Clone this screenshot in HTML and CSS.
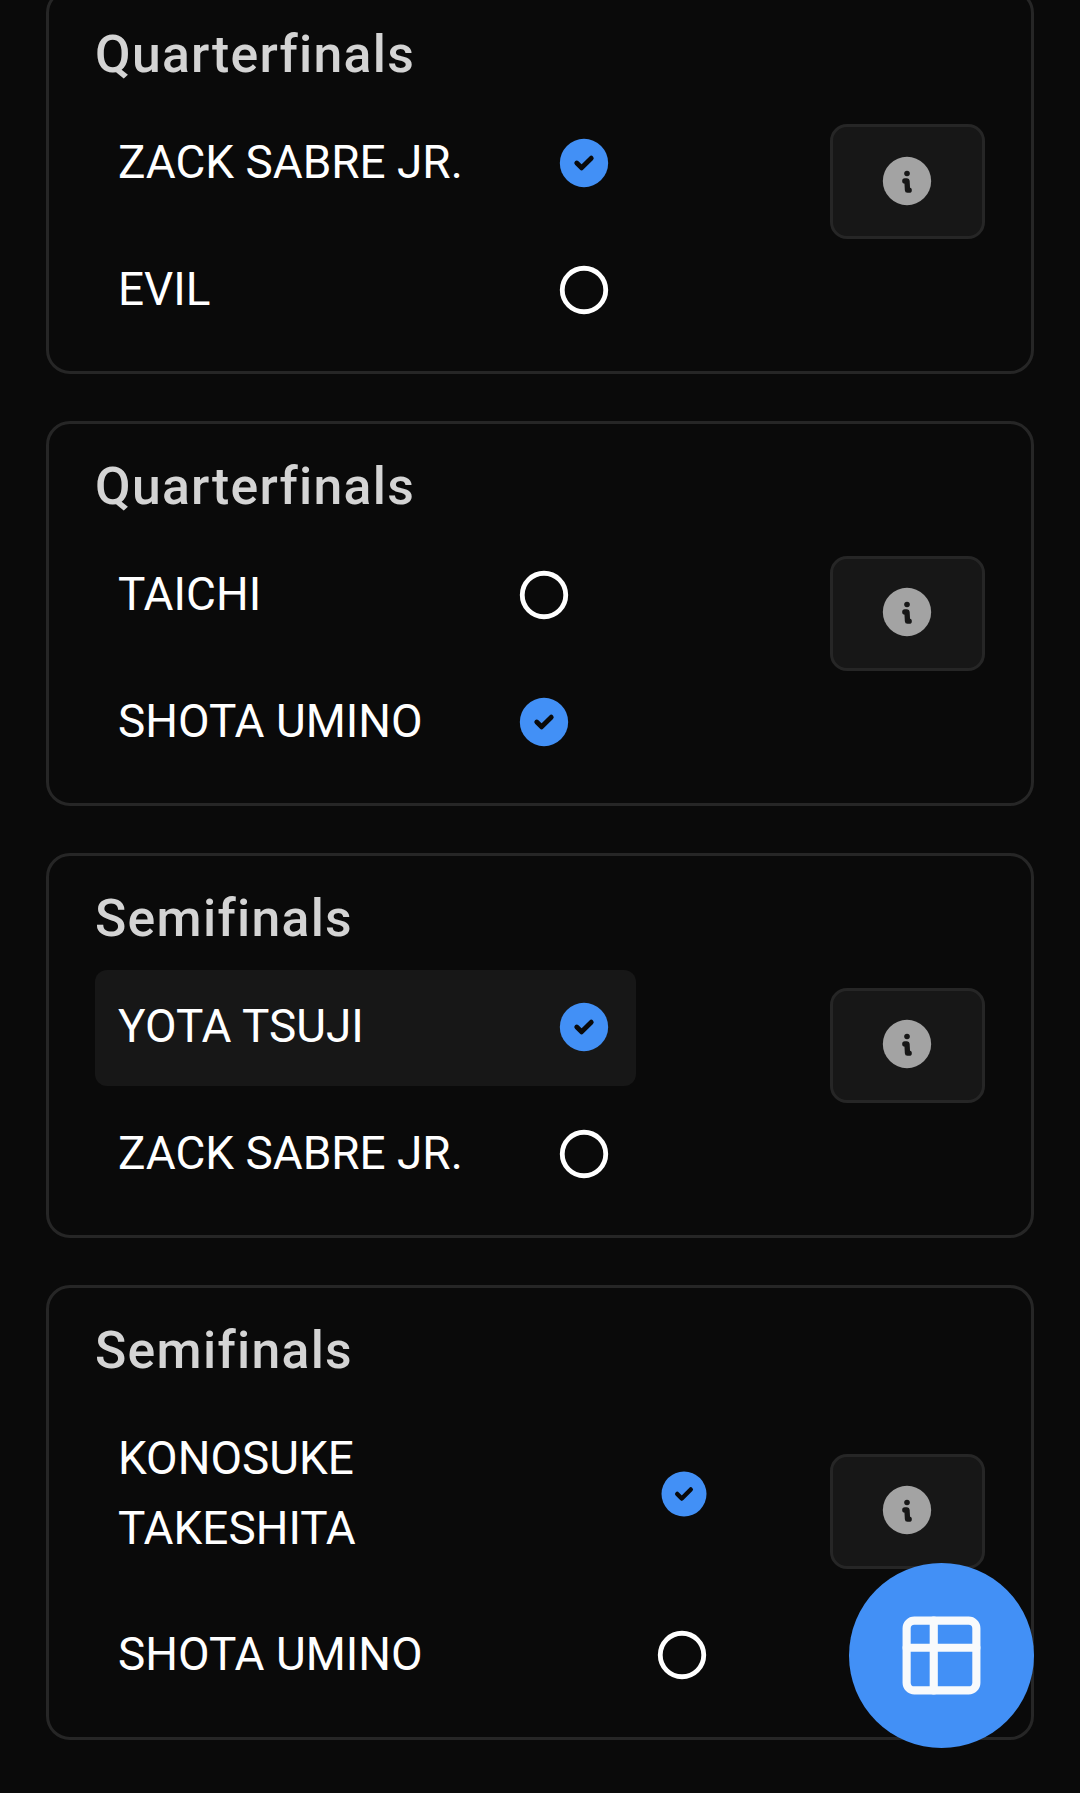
FILE: index.html
```html
<!DOCTYPE html>
<html lang="en">
<head>
  <meta charset="UTF-8" />
  <meta name="viewport" content="width=device-width, initial-scale=1.0"/>
  <title>Tournament Picks</title>
  <link rel="stylesheet" href="styles.css">
</head>
<body>

  <!-- Shared icons -->
  <svg class="icon-defs" width="0" height="0">
    <symbol id="icon-check" viewBox="0 0 24 24">
      <circle cx="12" cy="12" r="10" fill="#4290f6" />
      <path d="M9 12l2 2l4-4" fill="none" stroke="currentColor" stroke-width="2" stroke-linecap="round" stroke-linejoin="round" />
    </symbol>
    <symbol id="icon-circle" viewBox="0 0 24 24">
      <circle cx="12" cy="12" r="9" fill="none" stroke="#fff" stroke-width="2" />
    </symbol>
    <symbol id="icon-info" viewBox="0 0 24 24">
      <circle cx="12" cy="12" r="10" fill="#a3a3a3" />
      <path d="M12 8.9h.01" fill="none" stroke="#171717" stroke-width="2.3" stroke-linecap="round" />
      <path d="M11.1 12h.9l.2 3.8h.7" fill="none" stroke="#171717" stroke-width="2.2" stroke-linecap="round" stroke-linejoin="round" />
    </symbol>
  </svg>

  <main class="matches">
    <section class="card">
      <h2>Quarterfinals</h2>
      <div class="match">
        <div class="players">
          <div class="player"><span>ZACK SABRE JR.</span><svg class="icon"><use href="#icon-check" /></svg></div>
          <div class="player"><span>EVIL</span><svg class="icon"><use href="#icon-circle" /></svg></div>
        </div>
        <button class="info-button" aria-label="Match info"><svg class="icon"><use href="#icon-info" /></svg></button>
      </div>
    </section>

    <section class="card">
      <h2>Quarterfinals</h2>
      <div class="match">
        <div class="players narrow">
          <div class="player"><span>TAICHI</span><svg class="icon"><use href="#icon-circle" /></svg></div>
          <div class="player"><span>SHOTA UMINO</span><svg class="icon"><use href="#icon-check" /></svg></div>
        </div>
        <button class="info-button" aria-label="Match info"><svg class="icon"><use href="#icon-info" /></svg></button>
      </div>
    </section>

    <section class="card">
      <h2>Semifinals</h2>
      <div class="match">
        <div class="players">
          <div class="player active"><span>YOTA TSUJI</span><svg class="icon"><use href="#icon-check" /></svg></div>
          <div class="player"><span>ZACK SABRE JR.</span><svg class="icon"><use href="#icon-circle" /></svg></div>
        </div>
        <button class="info-button" aria-label="Match info"><svg class="icon"><use href="#icon-info" /></svg></button>
      </div>
    </section>

    <section class="card">
      <h2>Semifinals</h2>
      <div class="match tall">
        <div class="players wide">
          <div class="player"><span>KONOSUKE<br>TAKESHITA</span><svg class="icon small"><use href="#icon-check" /></svg></div>
          <div class="player"><span>SHOTA UMINO</span><svg class="icon"><use href="#icon-circle" /></svg></div>
        </div>
        <button class="info-button" aria-label="Match info"><svg class="icon"><use href="#icon-info" /></svg></button>
      </div>
    </section>
  </main>

  <button class="table-button" aria-label="Show table">
    <svg viewBox="0 0 24 24" fill="none" stroke="currentColor" stroke-width="2.1" stroke-linecap="round" stroke-linejoin="round">
      <path d="M3 5a2 2 0 0 1 2-2h14a2 2 0 0 1 2 2v14a2 2 0 0 1-2 2H5a2 2 0 0 1-2-2z" />
      <path d="M3 10h18M10 3v18" />
    </svg>
  </button>

</body>
</html>
```

FILE: styles.css
```css
* {
  box-sizing: border-box;
}

body {
  margin: 0;
  height: 1793px;
  overflow: hidden;
  background-color: #0a0a0a;
  color: #fff;
  font-family: Roboto, sans-serif;
  font-size: 45.9px;
  line-height: 69.6px;
}

button {
  padding: 0;
  border: none;
  display: flex;
  align-items: center;
  justify-content: center;
}

.icon-defs {
  display: block;
}

.matches {
  display: flex;
  flex-direction: column;
  gap: 47px;
  margin-top: -11px;
  padding: 0 46px;
}

.card {
  padding: 24px 46px 22.5px;
  border: 3px solid #262626;
  border-radius: 24px;
}

.card h2 {
  margin: 0 0 12px;
  color: #d4d4d4;
  font-size: 51.7px;
  font-weight: 500;
  line-height: 78px;
  letter-spacing: 1.3px;
}

.match {
  display: flex;
  justify-content: space-between;
  align-items: flex-start;
}

.players {
  display: flex;
  flex-direction: column;
  gap: 11.3px;
  width: 541px;
}

.players.narrow {
  width: 501px;
}

.players.wide {
  width: 639px;
}

.player {
  display: flex;
  align-items: center;
  justify-content: space-between;
  padding: 22px 23px 24px;
  border-radius: 12px;
}

.player.active {
  background-color: #171717;
}

.icon {
  flex: none;
  width: 58px;
  height: 58px;
  color: #0a0a0a;
}

.icon.small {
  width: 54px;
  height: 54px;
}

.info-button {
  width: 155px;
  height: 115px;
  margin-top: 18px;
  padding: 0 1px 2px 0;
  background-color: #171717;
  border: 3px solid #262626;
  border-radius: 17px;
}

.tall .info-button {
  margin-top: 52px;
}

.table-button {
  position: fixed;
  right: 46px;
  bottom: 45px;
  width: 185px;
  height: 185px;
  border-radius: 50%;
  background-color: #4290f6;
  color: #f8fafc;
}

.table-button svg {
  width: 93px;
  height: 93px;
}
```
